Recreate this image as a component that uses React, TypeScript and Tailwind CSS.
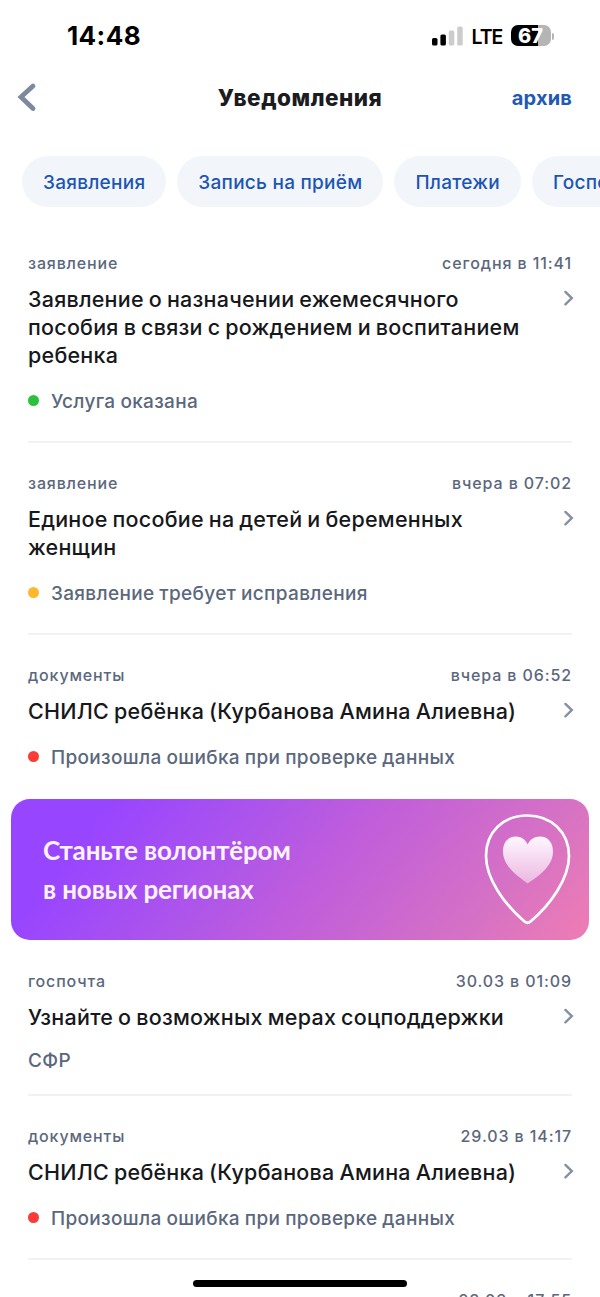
type Notice = {
  kind: string;
  date: string;
  title: string;
  status?: string;
  dot?: string;
  sender?: string;
  divider?: boolean;
};

const categories = ["Заявления", "Запись на приём", "Платежи", "Госпочта"];

const recent: Notice[] = [
  {
    kind: "заявление",
    date: "сегодня в 11:41",
    title: "Заявление о назначении ежемесячного пособия в связи с рождением и воспитанием ребенка",
    status: "Услуга оказана",
    dot: "bg-[#2bc13c]",
    divider: true,
  },
  {
    kind: "заявление",
    date: "вчера в 07:02",
    title: "Единое пособие на детей и беременных женщин",
    status: "Заявление требует исправления",
    dot: "bg-[#ffb72b]",
    divider: true,
  },
  {
    kind: "документы",
    date: "вчера в 06:52",
    title: "СНИЛС ребёнка (Курбанова Амина Алиевна)",
    status: "Произошла ошибка при проверке данных",
    dot: "bg-[#fb3b35]",
  },
];

const earlier: Notice[] = [
  {
    kind: "госпочта",
    date: "30.03 в 01:09",
    title: "Узнайте о возможных мерах соцподдержки",
    sender: "СФР",
    divider: true,
  },
  {
    kind: "документы",
    date: "29.03 в 14:17",
    title: "СНИЛС ребёнка (Курбанова Амина Алиевна)",
    status: "Произошла ошибка при проверке данных",
    dot: "bg-[#fb3b35]",
    divider: true,
  },
  {
    kind: "документы",
    date: "28.03 в 17:55",
    title: "СНИЛС ребёнка (Курбанова Амина Алиевна)",
    status: "Произошла ошибка при проверке данных",
    dot: "bg-[#fb3b35]",
  },
];

function StatusBar() {
  return (
    <div className="flex h-[72px] shrink-0 items-center justify-between pr-[46px] pl-[67px] text-black">
      <span className="text-[26px] leading-8 font-bold tracking-[0.4px]">14:48</span>
      <div className="flex items-center">
        <svg width="31" height="20" viewBox="0 0 31 20" className="mr-[9px]">
          <rect x="0" y="12" width="5.5" height="7.5" rx="1.6" />
          <rect x="8.4" y="8.5" width="5.5" height="11" rx="1.6" />
          <rect x="16.8" y="4.5" width="5.5" height="15" rx="1.6" fill="#cccccc" />
          <rect x="25.2" y="0.5" width="5.5" height="19" rx="1.6" fill="#cccccc" />
        </svg>
        <span className="mr-2 w-[31px] pt-px text-[19.5px] leading-6 font-semibold tracking-[-1px]">LTE</span>
        <div className="mb-px flex h-[21px] w-10 items-center justify-center rounded-[7px] bg-linear-to-r from-black from-67% to-[#b5b5b5] to-67%">
          <span className="pt-px text-[20px] leading-[20px] font-extrabold text-white">67</span>
        </div>
        <span className="ml-px h-[7px] w-[2.5px] rounded-r-full bg-[#b5b5b5]" />
      </div>
    </div>
  );
}

function Header() {
  return (
    <header className="grid h-[50px] shrink-0 grid-cols-[1fr_auto_1fr] items-center px-7">
      <svg width="20" height="30" viewBox="0 0 20 30" fill="none" className="-ml-[11px] justify-self-start">
        <path
          d="M16 4 L4 15 L16 26.5"
          stroke="#7d8a9d"
          strokeWidth="4.8"
          strokeLinecap="round"
          strokeLinejoin="miter"
        />
      </svg>
      <h1 className="pt-px text-[22.5px] leading-7 font-extrabold tracking-[0.5px] text-[#1b1c1f]">Уведомления</h1>
      <a className="justify-self-end pt-0.5 text-[20px] leading-7 font-bold tracking-[0.15px] text-[#2259b5]">архив</a>
    </header>
  );
}

function Categories() {
  return (
    <nav className="mt-[34px] flex shrink-0 gap-[11px] overflow-hidden pl-[22px]">
      {categories.map((name) => (
        <button
          key={name}
          className="h-[51px] shrink-0 rounded-full bg-[#f2f6fb] px-[21px] pt-[3px] text-[19px] font-medium tracking-[0.26px] whitespace-nowrap text-[#1c55b4]"
        >
          {name}
        </button>
      ))}
    </nav>
  );
}

function NoticeRow({ notice }: { notice: Notice }) {
  return (
    <article className="shrink-0 px-7">
      <div className="pt-[29px]">
        <div className="flex h-6 items-center justify-between text-[16px] font-medium tracking-[0.85px] text-[#5b677c]">
          <span>{notice.kind}</span>
          <span className="tracking-[0.9px]">{notice.date}</span>
        </div>
        <div className="mt-2.5 flex justify-between">
          <h2 className="w-[500px] text-[21.5px] leading-7 font-medium tracking-[0.23px] [word-spacing:-1px] text-[#17181b]">
            {notice.title}
          </h2>
          <svg width="12" height="18" viewBox="0 0 12 18" fill="none" className="mt-1 -mr-[3px]">
            <path d="M2.4 2.9 L8.8 9.1 L2.4 15.3" stroke="#8590a2" strokeWidth="2.4" strokeLinecap="round" />
          </svg>
        </div>
        {notice.status ? (
          <div className="mt-[21px] flex h-6 items-center text-[19px] font-medium tracking-[0.33px] [word-spacing:-0.5px] text-[#5b677c]">
            <span className={`mr-3 mb-1 size-[11px] rounded-full ${notice.dot}`} />
            {notice.status}
          </div>
        ) : (
          <div className="mt-[18px] h-6 text-[19px] leading-6 font-medium tracking-[0.4px] text-[#5b677c]">
            {notice.sender}
          </div>
        )}
      </div>
      <div className={notice.status ? "h-[27px]" : "h-[21px]"} />
      <div className={notice.divider ? "-mb-px h-0.5 bg-[#f1f2f4]" : "h-px"} />
    </article>
  );
}

function VolunteerBanner() {
  return (
    <section className="mx-[11px] mt-px flex h-[141px] shrink-0 items-center justify-between rounded-[19px] bg-linear-[128deg,#9845ff_15%,#b057e8_41%,#c05ddb_54%,#d672c4_82%,#ef7db3_100%] pr-[18px] pl-8">
      <p className="pt-px font-[Lato,sans-serif] text-[26px] leading-[39px] font-bold tracking-[-0.12px] text-[#fdf3ff]">
        Станьте волонтёром
        <br />
        в новых регионах
      </p>
      <svg width="88" height="112" viewBox="0 0 88 112" fill="none">
        <defs>
          <linearGradient id="heart" x1="0" y1="0" x2="0" y2="1">
            <stop offset="0" stopColor="#fff7ff" />
            <stop offset="1" stopColor="#ebb8e1" />
          </linearGradient>
        </defs>
        <path
          d="M44.500 1.500 C20 1.500 3 18 3 42 C3 65 22 91 41.500 107.500 Q44.500 110 47.500 107.500 C67 91 86 65 86 42 C86 18 68 1.500 44.500 1.500 Z"
          stroke="#fff"
          strokeWidth="2.7"
        />
        <path
          d="M44.700 69.500 C37 63.500 20 53.500 20 37.500 C20 28.500 25 22.500 32.500 22.500 C38.500 22.500 42.500 25.500 44.700 30.500 C47 25.500 51 22.500 57 22.500 C65 22.500 70 28.500 70 37.500 C70 53.500 53 63.500 44.700 69.500 Z"
          fill="url(#heart)"
        />
      </svg>
    </section>
  );
}

export default function App() {
  return (
    <main className="relative flex h-[1297px] w-[600px] flex-col overflow-hidden bg-white font-[Inter,sans-serif]">
      <StatusBar />
      <Header />
      <Categories />
      <div className="mt-[15px] shrink-0">
        {recent.map((notice) => (
          <NoticeRow key={notice.date} notice={notice} />
        ))}
        <VolunteerBanner />
        {earlier.map((notice) => (
          <NoticeRow key={notice.date} notice={notice} />
        ))}
      </div>
      <div className="absolute bottom-[10px] left-[193px] h-[7px] w-[214px] rounded-full bg-black" />
    </main>
  );
}
